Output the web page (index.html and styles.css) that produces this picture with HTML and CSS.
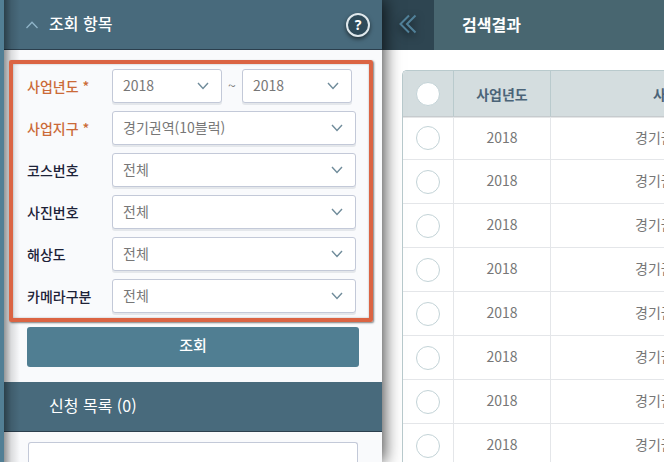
FILE: index.html
```html
<!DOCTYPE html>
<html lang="ko">
<head>
<meta charset="utf-8">
<title>검색결과</title>
<link rel="stylesheet" href="styles.css">
</head>
<body>
<div class="app">
  <aside class="panel">
    <header class="bar">
      <svg class="bar-chevron" viewBox="0 0 12 8" aria-hidden="true"><path d="M0.5 7 6 1.2 11.5 7"/></svg>
      <h2 class="bar-title strong">조회 항목</h2>
      <button class="help" type="button">?</button>
    </header>
    <form class="search">
      <div class="fields">
        <div class="field">
          <label class="label required" for="year-from">사업년도 *</label>
          <select class="select short" id="year-from"><option>2018</option></select>
          <span class="tilde">~</span>
          <select class="select short" id="year-to" aria-label="사업년도"><option>2018</option></select>
        </div>
        <div class="field">
          <label class="label required" for="area">사업지구 *</label>
          <select class="select" id="area"><option>경기권역(10블럭)</option></select>
        </div>
        <div class="field">
          <label class="label" for="course">코스번호</label>
          <select class="select" id="course"><option>전체</option></select>
        </div>
        <div class="field">
          <label class="label" for="photo">사진번호</label>
          <select class="select" id="photo"><option>전체</option></select>
        </div>
        <div class="field">
          <label class="label" for="resolution">해상도</label>
          <select class="select" id="resolution"><option>전체</option></select>
        </div>
        <div class="field">
          <label class="label" for="camera">카메라구분</label>
          <select class="select" id="camera"><option>전체</option></select>
        </div>
      </div>
      <button class="submit" type="button">조회</button>
    </form>
    <header class="bar">
      <h2 class="bar-title indent">신청 목록 (0)</h2>
    </header>
    <div class="requests">
      <textarea class="request-list" aria-label="신청 목록"></textarea>
    </div>
  </aside>
  <main class="main">
    <header class="main-bar">
      <button class="collapse" type="button" aria-label="접기">
        <svg class="collapse-icon" viewBox="0 0 18 20" aria-hidden="true"><path d="M10 1.5 1.5 10 10 18.5M16.5 1.5 8 10l8.5 8.5"/></svg>
      </button>
      <h1 class="main-title">검색결과</h1>
    </header>
    <div class="results">
      <table class="table">
        <colgroup><col class="col-check"><col class="col-year"><col></colgroup>
        <thead>
          <tr><th><input class="check" type="checkbox" aria-label="전체 선택"></th><th>사업년도</th><th class="area">사업지구</th></tr>
        </thead>
        <tbody>
          <tr><td><input class="check" type="checkbox" aria-label="선택"></td><td class="text">2018</td><td class="text area">경기권역</td></tr>
          <tr><td><input class="check" type="checkbox" aria-label="선택"></td><td class="text">2018</td><td class="text area">경기권역</td></tr>
          <tr><td><input class="check" type="checkbox" aria-label="선택"></td><td class="text">2018</td><td class="text area">경기권역</td></tr>
          <tr><td><input class="check" type="checkbox" aria-label="선택"></td><td class="text">2018</td><td class="text area">경기권역</td></tr>
          <tr><td><input class="check" type="checkbox" aria-label="선택"></td><td class="text">2018</td><td class="text area">경기권역</td></tr>
          <tr><td><input class="check" type="checkbox" aria-label="선택"></td><td class="text">2018</td><td class="text area">경기권역</td></tr>
          <tr><td><input class="check" type="checkbox" aria-label="선택"></td><td class="text">2018</td><td class="text area">경기권역</td></tr>
          <tr><td><input class="check" type="checkbox" aria-label="선택"></td><td class="text">2018</td><td class="text area">경기권역</td></tr>
        </tbody>
      </table>
    </div>
  </main>
</div>
</body>
</html>
```
FILE: styles.css
```css
* { box-sizing: border-box; }

body {
  margin: 0;
  overflow: hidden;
  background: #fff;
  color: #777;
  font: 14px/20px "Noto Sans CJK KR", sans-serif;
}

button, select, input, textarea { font: inherit; margin: 0; }

.app {
  display: flex;
  height: 100vh;
  overflow: hidden;
  border-left: 4px solid #527f95;
}

/* Left panel */
.panel {
  position: relative;
  z-index: 1;
  display: flex;
  flex-direction: column;
  flex: 0 0 378px;
  background: #f9fafc;
  box-shadow: 2px 0 16px rgba(0, 0, 0, 0.75);
}

/* Shade cast on the panel by the strip at its left */
.panel::before {
  content: "";
  position: absolute;
  inset: 0 auto 0 0;
  width: 16px;
  background: linear-gradient(90deg, rgba(0, 0, 0, 0.4), rgba(0, 0, 0, 0.12) 45%, rgba(0, 0, 0, 0));
  pointer-events: none;
}

.bar {
  display: flex;
  align-items: center;
  flex: none;
  height: 50px;
  padding: 0 12px 0 22px;
  border-bottom: 1px solid #2b3f4e;
  background: #486a7c;
}

.bar-chevron {
  width: 12px;
  height: 8px;
  margin-right: 11px;
  fill: none;
  stroke: #8fb4c8;
  stroke-width: 1.3;
}

.bar-title {
  margin: 0;
  padding-bottom: 3px;
  color: #fff;
  font-size: 16px;
  font-weight: 400;
  line-height: 24px;
}

.strong { font-weight: 500; }
.indent { margin-left: 23px; }

.help {
  width: 24px;
  height: 24px;
  margin-left: auto;
  padding: 0;
  border: 2px solid #dfe8ec;
  border-radius: 50%;
  background: #2e4a59;
  box-shadow: 0 2px 4px rgba(0, 0, 0, 0.55);
  color: #fff;
  font: 700 14px/20px "Noto Sans", sans-serif;
}

.search { padding: 10px 9px 15px 5px; }

.fields {
  position: relative;
  display: flex;
  flex-direction: column;
  gap: 8px;
  padding: 5px 13px 5px 14px;
  border: 4px solid #db6443;
  border-radius: 2px;
  box-shadow: 1px 1px 2px rgba(0, 0, 0, 0.5), inset 0 0 2px rgba(0, 0, 0, 0.3);
}

.field { display: flex; align-items: center; }

.label {
  flex: 0 0 85px;
  color: #1d2238;
  font-weight: 500;
}

.required { color: #cb6a38; }

.select {
  flex: 1;
  min-width: 0;
  height: 34px;
  padding: 0 10px 2px;
  border: 1px solid #c3c9d8;
  border-radius: 3px;
  appearance: none;
  background: #fff url("data:image/svg+xml,%3Csvg xmlns='http://www.w3.org/2000/svg' width='12' height='8'%3E%3Cpath d='M1 1 6 6.5 11 1' fill='none' stroke='%23708c9b' stroke-width='1.4'/%3E%3C/svg%3E") no-repeat right 12px center;
  box-shadow: 0 2px 0 #e4e7eb;
  color: #777;
}

.short { flex: 0 0 110px; }

.tilde {
  flex: 0 0 20px;
  padding-bottom: 3px;
  text-align: center;
}

.submit {
  display: block;
  width: 332px;
  height: 40px;
  margin: 5px 0 0 18px;
  padding: 0 0 4px;
  border: 0;
  border-radius: 3px;
  background: #507e92;
  color: #fff;
  font-size: 15px;
  font-weight: 500;
}

.requests {
  display: flex;
  flex: 1;
  padding: 10px 24px 0;
}

.request-list {
  flex: 1;
  border: 1px solid #c3c9d8;
  border-bottom: 0;
  border-radius: 3px 3px 0 0;
  resize: none;
}

/* Results */
.main { flex: 1; min-width: 0; }

.main-bar {
  display: flex;
  align-items: center;
  height: 50px;
  background: #486670;
}

.collapse {
  display: flex;
  align-items: center;
  justify-content: center;
  width: 52px;
  height: 50px;
  padding: 0 0 2px;
  border: 0;
  background: #2e4551;
}

.collapse-icon {
  width: 18px;
  height: 20px;
  fill: none;
  stroke: #518199;
  stroke-width: 2;
  filter: drop-shadow(0 3px 4px rgba(0, 0, 0, 0.6));
}

.main-title {
  margin: 0 0 0 28px;
  padding-bottom: 3px;
  color: #fff;
  font-size: 16px;
  font-weight: 700;
  line-height: 24px;
}

.results {
  margin: 20px 0 0 20px;
  overflow: hidden;
  border: 1px solid #b9cacd;
  border-right: 0;
  border-radius: 5px 0 0 0;
}

.table {
  width: 100%;
  border-collapse: separate;
  border-spacing: 0;
  table-layout: fixed;
  text-align: center;
  white-space: nowrap;
}

.col-check { width: 51px; }
.col-year { width: 97px; }

.table th, .table td {
  height: 44px;
  padding: 0;
  overflow: hidden;
  border-right: 1px solid #e4e6e9;
  border-bottom: 1px solid #e4e6e9;
}

.table th {
  height: 46px;
  border-right-color: #b9cacd;
  border-bottom-color: #c6cbce;
  background: #d4dddf;
  color: #4b6478;
  font-weight: 700;
}

.table tbody tr:first-child td {
  height: 43px;
  box-shadow: inset 0 1px 0 #e4e5e6;
}

.table .text { padding-bottom: 3px; }

.table .area {
  padding-left: 84px;
  border-right: 0;
  text-align: left;
}

.table th.area { padding-left: 102px; }

.check {
  display: block;
  width: 24px;
  height: 24px;
  margin: 0 auto;
  border: 1px solid #c3d3d7;
  border-radius: 50%;
  appearance: none;
  background: #fff;
}
```
